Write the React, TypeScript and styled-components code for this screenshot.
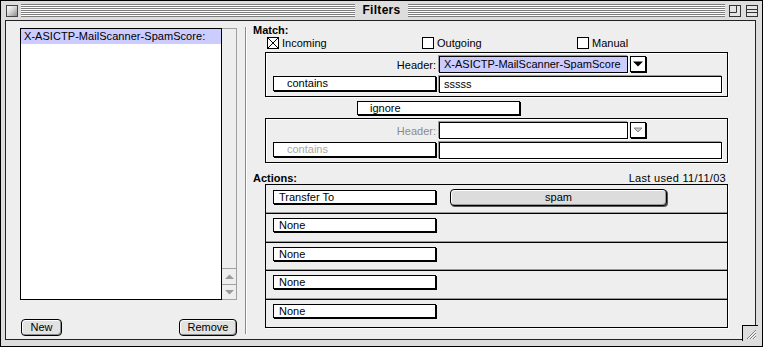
import styled, { createGlobalStyle } from "styled-components";

const lavender = "#ccccff";

const GlobalStyle = createGlobalStyle`
  * { box-sizing: border-box; }
  html, body { margin: 0; padding: 0; background: #ffffff; }
  body {
    font-family: "Liberation Sans", Arial, sans-serif;
    font-size: 11px;
    color: #000;
  }
`;

const actions = [
  { label: "Transfer To", target: "spam" },
  { label: "None" },
  { label: "None" },
  { label: "None" },
  { label: "None" },
];

export default function App() {
  return <>
    <GlobalStyle />
    <Window>
      <TitleBar>
        <TitleSide>
          <CloseBox />
          <Stripes />
        </TitleSide>
        <Title>Filters</Title>
        <TitleSide>
          <Stripes />
          <TitleWidget>
            <svg width="12" height="12" viewBox="0 0 12 12">
              <rect x="0.5" y="0.5" width="11" height="11" fill="#e4e4e4" stroke="#333" />
              <path d="M0.5 7.5 H7.5 V0.5" fill="none" stroke="#333" />
            </svg>
          </TitleWidget>
          <TitleWidget>
            <svg width="12" height="12" viewBox="0 0 12 12">
              <rect x="0.5" y="0.5" width="11" height="11" fill="#e4e4e4" stroke="#333" />
              <path d="M0.5 4.5 H11.5 M0.5 7.5 H11.5" fill="none" stroke="#333" />
            </svg>
          </TitleWidget>
        </TitleSide>
      </TitleBar>
      <Frame>
        <Content>
          <LeftColumn>
            <FilterList>
              <ListBody>
                <ListItem $selected>X-ASICTP-MailScanner-SpamScore:</ListItem>
              </ListBody>
              <ScrollBar>
                <ScrollArrow>
                  <svg width="9" height="5" viewBox="0 0 9 5"><path d="M0 5 L4.5 0.5 L9 5 Z" fill="#9a9a9a" /></svg>
                </ScrollArrow>
                <ScrollArrow>
                  <svg width="9" height="5" viewBox="0 0 9 5"><path d="M0 0 L4.5 4.5 L9 0 Z" fill="#9a9a9a" /></svg>
                </ScrollArrow>
              </ScrollBar>
            </FilterList>
            <ListButtons>
              <PushButton $w={41}>New</PushButton>
              <PushButton $w={58}>Remove</PushButton>
            </ListButtons>
          </LeftColumn>

          <Divider />

          <RightColumn>
            <SectionLabel>Match:</SectionLabel>
            <CheckRow>
              <CheckItem><CheckBox $checked /><span>Incoming</span></CheckItem>
              <CheckItem><CheckBox /><span>Outgoing</span></CheckItem>
              <CheckItem><CheckBox /><span>Manual</span></CheckItem>
            </CheckRow>

            <GroupBox $mt={3}>
              <FieldLabel>Header:</FieldLabel>
              <FieldWithButton>
                <TextField $w={189} $bg={lavender}>X-ASICTP-MailScanner-SpamScore</TextField>
                <DropButton>
                  <svg width="10" height="6" viewBox="0 0 10 6"><path d="M0 0.5 H10 L5 5.5 Z" fill="#000" /></svg>
                </DropButton>
              </FieldWithButton>
              <Popup $h={15} $indent={13}>contains</Popup>
              <TextField $w={283}>sssss</TextField>
            </GroupBox>

            <IgnorePopup $h={14} $indent={12}>ignore</IgnorePopup>

            <GroupBox $mt={3}>
              <FieldLabel $disabled>Header:</FieldLabel>
              <FieldWithButton>
                <TextField $w={189} />
                <DropButton>
                  <svg width="10" height="6" viewBox="0 0 10 6"><path d="M1 1 H9 L5 5 Z" fill="#c8c8c8" stroke="#8a8a8a" /></svg>
                </DropButton>
              </FieldWithButton>
              <Popup $h={15} $indent={13} $disabled>contains</Popup>
              <TextField $w={283} />
            </GroupBox>

            <ActionsHeader>
              <SectionLabel>Actions:</SectionLabel>
              <span>Last used 11/11/03</span>
            </ActionsHeader>

            <ActionList>
              {actions.map((a, i) =>
                <ActionRow key={i}>
                  <Popup $h={14} $indent={5}>{a.label}</Popup>
                  {a.target && <TargetButton>{a.target}</TargetButton>}
                </ActionRow>
              )}
            </ActionList>
          </RightColumn>
        </Content>
      </Frame>
      <GrowBox>
        <svg width="15" height="15" viewBox="0 0 15 15">
          <path d="M4 13 L13 4 M7 13 L13 7 M10 13 L13 10" stroke="#7a7a7a" strokeWidth="1" />
          <path d="M5 13 L13 5 M8 13 L13 8 M11 13 L13 11" stroke="#ffffff" strokeWidth="1" />
        </svg>
      </GrowBox>
    </Window>
  </>;
}

const Window = styled.div`
  position: relative;
  width: 763px;
  height: 347px;
  border: 1px solid #000;
  background: #dddddd;
  display: flex;
  flex-direction: column;
`;

const TitleBar = styled.div`
  height: 19px;
  display: grid;
  grid-template-columns: 1fr auto 1fr;
  align-items: center;
`;

const TitleSide = styled.div`
  display: flex;
  align-items: center;
  gap: 4px;
  &:first-child { padding-left: 5px; gap: 3px; }
  &:last-child { padding-right: 4px; gap: 5px; }
  &:last-child > div:first-child { margin-right: -1px; }
`;

const Stripes = styled.div`
  flex: 1;
  height: 13px;
  background: repeating-linear-gradient(to bottom, #7c7c7c 0, #7c7c7c 1px, #ffffff 1px, #ffffff 2px);
`;

const Title = styled.div`
  padding: 0 7px;
  font-weight: bold;
  font-size: 12px;
  line-height: 19px;
  letter-spacing: 0.3px;
`;

const CloseBox = styled.div`
  width: 12px;
  height: 12px;
  border: 1px solid #444;
  background: linear-gradient(135deg, #ffffff 0%, #d8d8d8 45%, #8c8c8c 100%);
`;

const TitleWidget = styled.div`
  width: 12px;
  height: 12px;
  display: flex;
`;

const Frame = styled.div`
  flex: 1;
  display: flex;
  padding: 0 6px 6px 4px;
`;

const Content = styled.div`
  flex: 1;
  display: flex;
  border: 1px solid #222;
  background: #eeeeee;
`;

const LeftColumn = styled.div`
  width: 231px;
  padding: 7px 0 0 14px;
  display: flex;
  flex-direction: column;
`;

const FilterList = styled.div`
  width: 217px;
  height: 272px;
  display: flex;
`;

const ListBody = styled.div`
  width: 202px;
  border: 1px solid #000;
  background: #fff;
`;

const ListItem = styled.div<{ $selected?: boolean }>`
  height: 15px;
  line-height: 15px;
  padding-left: 3px;
  letter-spacing: 0.05px;
  white-space: nowrap;
  background: ${p => p.$selected ? lavender : "transparent"};
`;

const ScrollBar = styled.div`
  width: 15px;
  border: 1px solid #a0a0a0;
  border-left: none;
  background: #eeeeee;
  display: flex;
  flex-direction: column;
  justify-content: flex-end;
`;

const ScrollArrow = styled.div`
  height: 16px;
  border-top: 1px solid #a0a0a0;
  display: flex;
  align-items: center;
  justify-content: center;
  &:last-child { height: 15px; }
`;

const ListButtons = styled.div`
  margin-top: 19px;
  width: 217px;
  padding-left: 1px;
  display: flex;
  justify-content: space-between;
`;

const PushButton = styled.div<{ $w: number }>`
  width: ${p => p.$w}px;
  height: 17px;
  border: 1px solid #000;
  border-radius: 4px;
  background: #e2e2e2;
  box-shadow: inset 1px 1px 0 #fff, inset -1px -1px 0 #8e8e8e;
  text-align: center;
  line-height: 15px;
`;

const Divider = styled.div`
  margin: 6px 0 0 8px;
  width: 2px;
  height: 307px;
  border-left: 1px solid #8a8a8a;
  border-right: 1px solid #ffffff;
`;

const RightColumn = styled.div`
  flex: 1;
  padding: 3px 0 0 6px;
  display: flex;
  flex-direction: column;
  align-items: flex-start;
`;

const SectionLabel = styled.div`
  font-weight: bold;
  line-height: 13px;
  height: 13px;
`;

const CheckRow = styled.div`
  height: 12px;
  padding-left: 14px;
  display: grid;
  grid-template-columns: repeat(3, 155px);
`;

const CheckItem = styled.div`
  display: flex;
  align-items: center;
  gap: 3px;
  line-height: 12px;
`;

const CheckBox = styled.div<{ $checked?: boolean }>`
  width: 12px;
  height: 12px;
  border: 1px solid #000;
  background: #fff;
  ${p => p.$checked && `
    background:
      linear-gradient(to top right, transparent calc(50% - 0.6px), #000 calc(50% - 0.6px), #000 calc(50% + 0.6px), transparent calc(50% + 0.6px)),
      linear-gradient(to bottom right, transparent calc(50% - 0.6px), #000 calc(50% - 0.6px), #000 calc(50% + 0.6px), transparent calc(50% + 0.6px)),
      #fff;
  `}
`;

const GroupBox = styled.div<{ $mt: number }>`
  margin: ${p => p.$mt}px 0 0 12px;
  width: 463px;
  border: 1px solid #000;
  box-shadow: 1px 1px 0 #fff, inset 1px 1px 0 #fff;
  padding: 3px 5px 3px 7px;
  display: grid;
  grid-template-columns: 164px 283px;
  grid-auto-rows: 17px;
  column-gap: 2px;
  row-gap: 3px;
`;

const FieldLabel = styled.div<{ $disabled?: boolean }>`
  display: flex;
  align-items: center;
  justify-content: flex-end;
  padding-right: 1px;
  color: ${p => p.$disabled ? "#8a8a8a" : "#000"};
`;

const FieldWithButton = styled.div`
  display: flex;
  align-items: flex-start;
  gap: 2px;
`;

const TextField = styled.div<{ $w: number; $bg?: string }>`
  width: ${p => p.$w}px;
  height: 17px;
  border: 1px solid #000;
  box-shadow: -1px -1px 0 #9a9a9a, 1px 1px 0 #fff;
  background: ${p => p.$bg ?? "#fff"};
  padding-left: 4px;
  line-height: 15px;
  white-space: nowrap;
  overflow: hidden;
`;

const DropButton = styled.div`
  width: 16px;
  height: 16px;
  border: 1px solid #000;
  box-shadow: 1px 1px 0 #000;
  background: #fff;
  display: flex;
  align-items: center;
  justify-content: center;
`;

const Popup = styled.div<{ $h: number; $indent: number; $disabled?: boolean }>`
  width: 163px;
  height: ${p => p.$h}px;
  border: 1px solid #000;
  box-shadow: 1px 1px 0 #000;
  background: #fff;
  padding-left: ${p => p.$indent}px;
  line-height: ${p => p.$h - 2}px;
  white-space: nowrap;
  color: ${p => p.$disabled ? "#a8a8a8" : "#000"};
`;

const IgnorePopup = styled(Popup)`
  margin: 4px 0 0 104px;
`;

const ActionsHeader = styled.div`
  margin-top: 10px;
  width: 475px;
  padding-right: 2px;
  display: flex;
  justify-content: space-between;
  align-items: flex-end;
  line-height: 11px;
  height: 11px;
  letter-spacing: 0.3px;
  & > div { line-height: 11px; height: 11px; letter-spacing: 0; }
`;

const ActionList = styled.div`
  margin-left: 12px;
  width: 463px;
  border: 1px solid #000;
  box-shadow: 1px 1px 0 #fff;
`;

const ActionRow = styled.div`
  height: 28.4px;
  border-top: 1px solid #000;
  box-shadow: 0 -1px 0 #9a9a9a;
  padding: 4px 0 0 7px;
  display: flex;
  align-items: flex-start;
  &:first-child { border-top-color: transparent; box-shadow: none; }
`;

const TargetButton = styled.div`
  margin: -1px 0 0 14px;
  width: 217px;
  height: 17px;
  border: 1px solid #000;
  border-radius: 4px;
  background: #dcdcdc;
  box-shadow: inset 1px 1px 0 #fff, inset -1px -1px 0 #9a9a9a, 1px 1px 0 #555;
  text-align: center;
  line-height: 15px;
`;

const GrowBox = styled.div`
  position: absolute;
  right: 4px;
  bottom: 5px;
  width: 16px;
  height: 16px;
  border-top: 1px solid #000;
  border-left: 1px solid #000;
  background: #dddddd;
  display: flex;
`;
